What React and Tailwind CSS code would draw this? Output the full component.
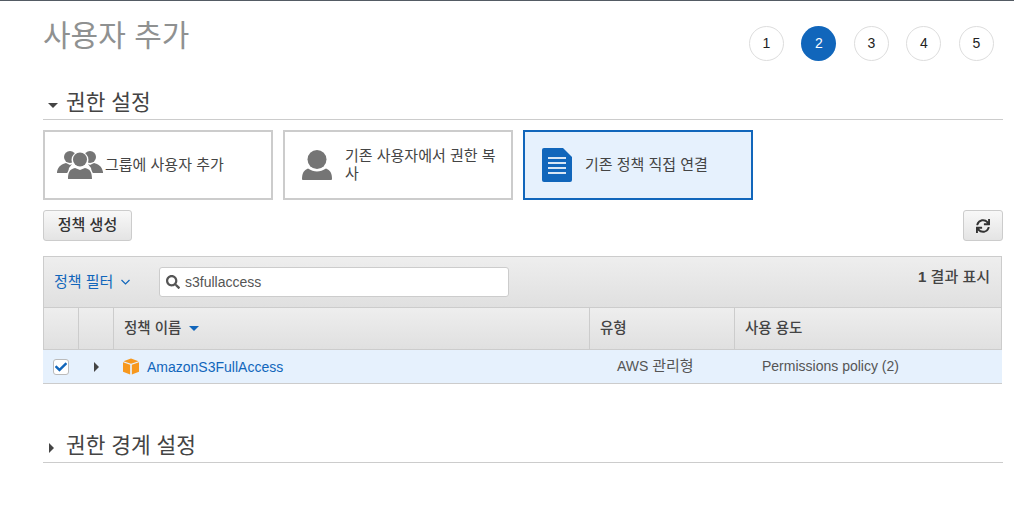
import { FaSearch, FaSync, FaCheck } from 'react-icons/fa';

const steps = [1, 2, 3, 4, 5];

function GroupIcon() {
  return (
    <svg width="46" height="30" viewBox="0 0 46 30" className="shrink-0">
      <g fill="#757575">
        <circle cx="13" cy="7" r="6" />
        <circle cx="33" cy="7" r="6" />
        <path d="M0 22c1-6 5-8 9-9l4 2 2-1-3 4-1 5H0z" />
        <path d="M46 22c-1-6-5-8-9-9l-4 2-2-1 3 4 1 5h11z" />
      </g>
      <circle cx="23" cy="10" r="8.5" fill="#fff" />
      <path d="M9 30c0-8 3-12 9-13l5 2 5-2c6 1 9 5 9 13H9z" fill="#fff" />
      <circle cx="23" cy="9.5" r="7" fill="#757575" />
      <path d="M11 29c0-7 2-10 7-11l5 2 5-2c5 1 7 4 7 11H11z" fill="#757575" />
    </svg>
  );
}

function UserIcon() {
  return (
    <svg width="30" height="30" viewBox="0 0 30 30" className="shrink-0">
      <circle cx="15" cy="9.5" r="9.5" fill="#757575" />
      <path d="M0 29c0-6 2-9 6-10.500 3 2 6 3 9 3s6-1 9-3c4 1.500 6 4.500 6 10.500 0 .5-.5 1-1 1H1c-.5 0-1-.5-1-1z" fill="#757575" />
    </svg>
  );
}

function DocIcon() {
  return (
    <svg width="30" height="34" viewBox="0 0 30 34" className="shrink-0">
      <path d="M2 0h19l9 9v23a2 2 0 0 1-2 2H2a2 2 0 0 1-2-2V2a2 2 0 0 1 2-2z" fill="#1166bb" />
      <g fill="#d8e6f5">
        <rect x="6" y="9" width="18" height="2" />
        <rect x="6" y="14" width="18" height="2" />
        <rect x="6" y="19" width="18" height="2" />
        <rect x="6" y="24" width="18" height="2" />
      </g>
    </svg>
  );
}

function BoxIcon() {
  return (
    <svg width="16" height="17" viewBox="0 0 17 17" className="shrink-0">
      <path d="M8.500 0 16.500 2.800 8.500 5.600 .5 2.800z" fill="#f7981d" />
      <path d="M0 4l7.600 2.700V17L0 14z" fill="#f7981d" />
      <path d="M17 4 9.400 6.700V17L17 14z" fill="#f7981d" />
    </svg>
  );
}

function Caret({ open }) {
  return open ? (
    <span className="w-0 h-0 border-x-[5px] border-x-transparent border-t-[5px] border-t-[#444] mt-[3px]" />
  ) : (
    <span className="w-0 h-0 border-y-[5px] border-y-transparent border-l-[5px] border-l-[#444] mt-[3px]" />
  );
}

function Card({ icon, label, active, pad = 'pl-[17px]', gap = 'gap-[13px]' }) {
  return (
    <div
      className={`w-[230px] h-[70px] border-2 flex items-center pr-[12px] text-[15px] leading-[18px] text-[#444] ${pad} ${gap} ${
        active ? 'border-[#1166bb] bg-[#e6f1fd]' : 'border-[#ccc] bg-white'
      }`}
    >
      {icon}
      <span>{label}</span>
    </div>
  );
}

export default function App() {
  return (
    <div
      className="w-[1014px] h-[511px] overflow-hidden bg-white border-t border-t-[#545b64] pl-[43px] pr-[11px]"
      style={{ fontFamily: '"Liberation Sans", "Noto Sans CJK KR", sans-serif' }}
    >
      <div className="flex justify-between h-[78px]">
        <h1 className="text-[30px] leading-[34px] pt-[18px] text-[#8f9191] font-normal">사용자 추가</h1>
        <div className="flex gap-[17.500px] pt-[25px] pr-[9.200px] h-fit">
          {steps.map((n) => (
            <div
              key={n}
              className={`w-[35px] h-[35px] rounded-full flex items-center justify-center text-[14px] ${
                n === 2 ? 'bg-[#1166bb] text-white' : 'border border-[#ddd] text-[#222]'
              }`}
            >
              {n}
            </div>
          ))}
        </div>
      </div>

      <div className="flex items-center gap-[8px] h-[41px] pt-[9px] border-b border-b-[#ccc] pl-[5px] text-[21.400px] text-[#444]">
        <Caret open />
        <span>권한 설정</span>
      </div>

      <div className="flex gap-[10px] mt-[10px]">
        <Card icon={<GroupIcon />} label="그룹에 사용자 추가" pad="pl-[12px]" gap="gap-[2px]" />
        <Card icon={<UserIcon />} label="기존 사용자에서 권한 복사" />
        <Card icon={<DocIcon />} label="기존 정책 직접 연결" active />
      </div>

      <div className="flex justify-between mt-[10px]">
        <button className="w-[89px] h-[31px] rounded-[3px] border border-[#ccc] bg-gradient-to-b from-[#f8f8f8] to-[#e4e4e4] text-[15px] font-medium text-[#333]">
          정책 생성
        </button>
        <button className="w-[40px] h-[31px] rounded-[3px] border border-[#ccc] bg-gradient-to-b from-[#f8f8f8] to-[#e4e4e4] flex items-center justify-center text-[#333]">
          <FaSync size={14} />
        </button>
      </div>

      <div className="w-[959px] mt-[15px] border-b border-b-[#ccc]">
        <div className="h-[52px] flex items-center justify-between bg-gradient-to-b from-[#eee] to-[#e0e0e0] border border-[#ccc] pl-[10px] pr-[11px]">
          <div className="flex items-center">
            <span className="w-[105px] flex items-center gap-[8px] text-[15px] text-[#1166bb]">
              정책 필터
              <svg width="9" height="6" viewBox="0 0 9 6">
                <path d="M.5 1l4 4 4-4" fill="none" stroke="#1166bb" strokeWidth="1.200" />
              </svg>
            </span>
            <div className="w-[350px] h-[30px] rounded-[3px] bg-white border border-[#ccc] flex items-center gap-[5px] pl-[6px] text-[14px] text-[#555]">
              <FaSearch size={14} className="text-[#555]" />
              <span className="pt-[1px]">s3fullaccess</span>
            </div>
          </div>
          <span className="text-[15px] font-medium text-[#444] pb-[10px]">
            <span className="font-bold">1</span> 결과 표시
          </span>
        </div>

        <div className="h-[41px] flex bg-gradient-to-b from-[#eee] to-[#e0e0e0] border-x border-x-[#ccc] text-[14.500px] font-medium text-[#444]">
          <div className="w-[35px] border-r border-r-[#ccc]" />
          <div className="w-[35px] border-r border-r-[#ccc]" />
          <div className="w-[476px] border-r border-r-[#ccc] flex items-center gap-[8px] pl-[10px]">
            정책 이름
            <span className="w-0 h-0 border-x-[5.500px] border-x-transparent border-t-[5px] border-t-[#1166bb]" />
          </div>
          <div className="w-[145px] border-r border-r-[#ccc] flex items-center pl-[10px]">유형</div>
          <div className="flex-1 flex items-center pl-[10px]">사용 용도</div>
        </div>

        <div className="h-[34px] flex items-center pl-[1px] bg-[#e6f1fd] border-t border-t-[#ccc] text-[14px] text-[#555]">
          <div className="w-[35px] flex justify-center pr-[2px]">
            <span className="w-[16px] h-[16px] rounded-[3px] border border-[#bbb] bg-white flex items-center justify-center text-[#1166bb]">
              <FaCheck size={12} />
            </span>
          </div>
          <div className="w-[35px] flex justify-center">
            <span className="w-0 h-0 border-y-[5px] border-y-transparent border-l-[5px] border-l-[#444]" />
          </div>
          <div className="w-[476px] flex items-center gap-[8px] pl-[9px] pb-[1px]">
            <BoxIcon />
            <span className="text-[#1166bb] pt-[2px]">AmazonS3FullAccess</span>
          </div>
          <div className="w-[145px] pl-[27px]">
            AWS <span className="text-[15px]">관리형</span>
          </div>
          <div className="flex-1 pl-[27px]">Permissions policy (2)</div>
        </div>
      </div>

      <div className="flex items-center gap-[12px] h-[41px] pt-[8px] mt-[38px] border-b border-b-[#ccc] pl-[6px] text-[21.400px] text-[#444]">
        <Caret />
        <span>권한 경계 설정</span>
      </div>
    </div>
  );
}
